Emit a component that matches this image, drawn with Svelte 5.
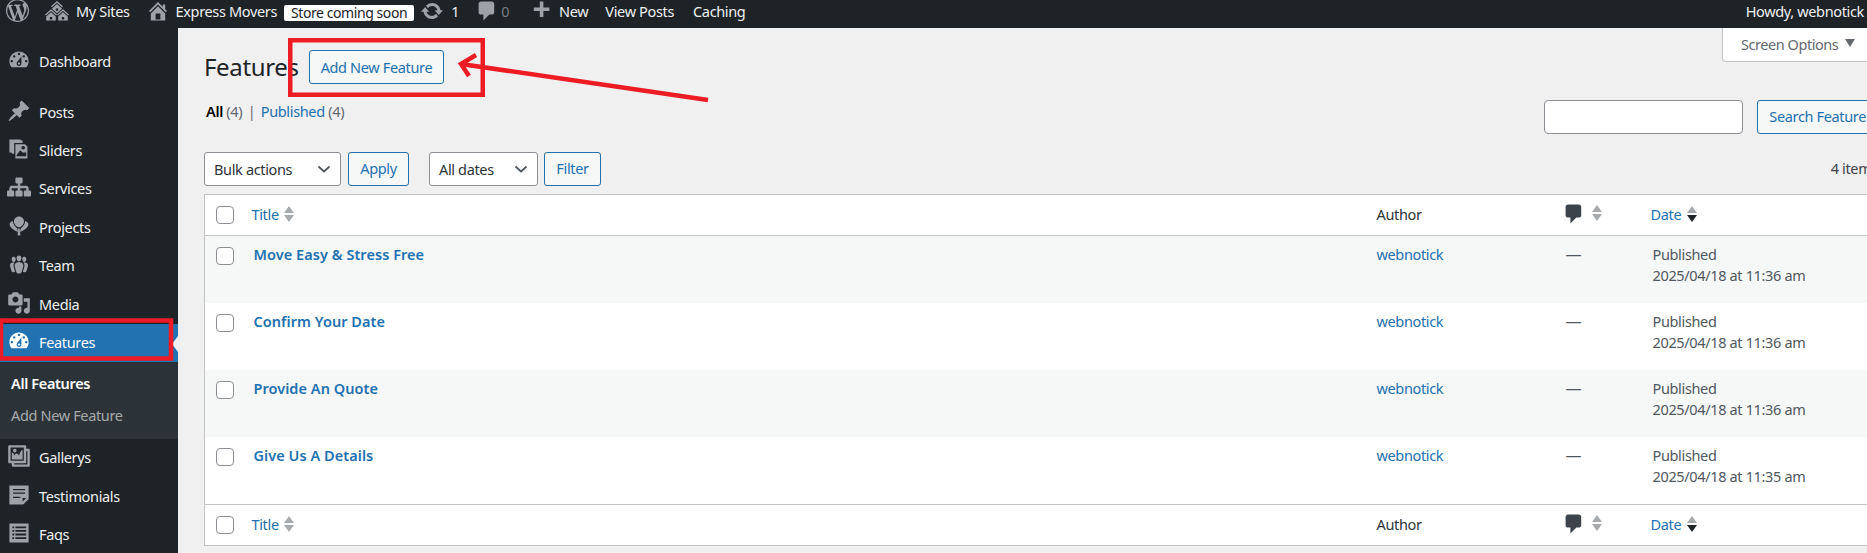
<script>
  const icons = {
    wp: 'M20 10c0-5.51-4.49-10-10-10C4.48 0 0 4.49 0 10c0 5.52 4.48 10 10 10 5.51 0 10-4.48 10-10zM7.78 15.37L4.37 6.22c.55-.02 1.17-.08 1.17-.08.5-.06.44-1.13-.06-1.11 0 0-1.45.11-2.37.11-.18 0-.37 0-.58-.01C4.12 2.69 6.87 1.11 10 1.11c2.33 0 4.45.87 6.05 2.34-.68-.11-1.65.39-1.65 1.58 0 .74.45 1.36.9 2.1.35.61.55 1.36.55 2.46 0 1.49-1.4 5-1.4 5l-3.03-8.37c.54-.02.82-.17.82-.17.5-.05.44-1.25-.06-1.22 0 0-1.44.12-2.38.12-.87 0-2.33-.12-2.33-.12-.5-.03-.56 1.2-.06 1.22l.92.08 1.26 3.41zM17.41 10c.24-.64.74-1.87.43-4.25.7 1.29 1.05 2.71 1.05 4.25 0 3.29-1.73 6.24-4.4 7.78.97-2.59 1.94-5.2 2.92-7.78zM6.1 18.09C3.12 16.65 1.11 13.53 1.11 10c0-1.3.23-2.48.72-3.59C3.25 10.3 4.67 14.2 6.1 18.09zm4.03-6.63l2.58 6.98c-.86.29-1.76.45-2.71.45-.79 0-1.57-.11-2.29-.33.81-2.38 1.62-4.74 2.42-7.1z',
    sites: 'M14.27 6.87L10 3.14 5.73 6.87 5 6.14l5-4.38 5 4.38zM14 8.42l-4.05 3.43L6 8.38v-.74l4-3.5 4 3.5v.78zM11 9.7V8H9v1.7h2zm-1.73 4.03L5 10 .73 13.73 0 13l5-4.38L10 13zm10 0L15 10l-4.27 3.73L10 13l5-4.38L20 13zM5 11l4 3.5V18H1v-3.5zm10 0l4 3.5V18h-8v-3.5zM6 17v-2H4v2h2zm10 0v-2h-2v2h2z',
    home: 'M16 8.5l1.53 1.53-1.06 1.06L10 4.62l-6.47 6.47-1.06-1.06L10 2.5l4 4v-2h2v4zm-6-2.46l6 5.99V18H4v-5.97zM12 17v-5H8v5h4z',
    update: 'M10.2 3.28c3.53 0 6.43 2.61 6.92 6h2.08l-3.5 4-3.5-4h2.32c-.45-1.97-2.21-3.45-4.32-3.45-1.45 0-2.73.71-3.54 1.78L4.95 5.66C6.23 4.2 8.11 3.28 10.2 3.28zm-.4 13.44c-3.52 0-6.43-2.61-6.92-6H.8l3.5-4c1.17 1.33 2.33 2.67 3.5 4H5.48c.45 1.97 2.21 3.45 4.32 3.45 1.45 0 2.73-.71 3.54-1.78l1.71 1.95c-1.28 1.46-3.15 2.38-5.25 2.38z',
    comment: 'M5 2h9c1.1 0 2 .9 2 2v7c0 1.1-.9 2-2 2h-2l-5 5v-5H5c-1.1 0-2-.9-2-2V4c0-1.1.9-2 2-2z',
    plus: 'M17 7v3h-5v5H9v-5H4V7h5V2h3v5h5z',
    dashboard: 'M3.76 16h12.48c1.1-1.37 1.76-3.11 1.76-5 0-4.42-3.58-8-8-8s-8 3.58-8 8c0 1.89.66 3.63 1.76 5zM10 4c.55 0 1 .45 1 1s-.45 1-1 1-1-.45-1-1 .45-1 1-1zM6 6c.55 0 1 .45 1 1s-.45 1-1 1-1-.45-1-1 .45-1 1-1zm8 0c.55 0 1 .45 1 1s-.45 1-1 1-1-.45-1-1 .45-1 1-1zm-5.37 5.55L12 7v6c0 1.1-.9 2-2 2s-2-.9-2-2c0-.57.24-1.08.63-1.45zM4 10c.55 0 1 .45 1 1s-.45 1-1 1-1-.45-1-1 .45-1 1-1zm12 0c.55 0 1 .45 1 1s-.45 1-1 1-1-.45-1-1 .45-1 1-1zm-5 3c0-.55-.45-1-1-1s-1 .45-1 1 .45 1 1 1 1-.45 1-1z',
    pin: 'M10.44 3.02l1.82-1.82 6.36 6.35-1.83 1.82c-1.05-.68-2.48-.57-3.41.36l-.75.75c-.92.93-1.04 2.35-.35 3.41l-1.83 1.82-2.41-2.41-2.8 2.79c-.42.42-3.38 2.71-3.8 2.29s1.86-3.39 2.28-3.81l2.79-2.79L4.1 9.36l1.83-1.82c1.05.69 2.48.57 3.4-.36l.75-.75c.93-.92 1.05-2.35.36-3.41z',
    sliders: 'M2 2h9l1 1h1v2H6v9H4v-1H2zM7 6h8l2 2v10H7zm6.5 1.5a1.5 1.5 0 1 0 0 3 1.5 1.5 0 0 0 0-3zM8 15l3-4 2 2 3 0v3H8z',
    network: 'M18 13h1c.55 0 1 .45 1 1.01v2.98c0 .56-.45 1.01-1 1.01h-4c-.55 0-1-.45-1-1.01v-2.98c0-.56.45-1.01 1-1.01h1v-2h-5v2h1c.55 0 1 .45 1 1.01v2.98c0 .56-.45 1.01-1 1.01H8c-.55 0-1-.45-1-1.01v-2.98c0-.56.45-1.01 1-1.01h1v-2H4v2h1c.55 0 1 .45 1 1.01v2.98C6 17.55 5.55 18 5 18H1c-.55 0-1-.45-1-1.01v-2.98C0 13.45.45 13 1 13h1v-2c0-1.1.9-2 2-2h5V7H8c-.55 0-1-.45-1-1.01V3.01C7 2.45 7.45 2 8 2h4c.55 0 1 .45 1 1.01v2.98C13 6.55 12.55 7 12 7h-1v2h5c1.1 0 2 .9 2 2v2z',
    projects: 'M10 2c2.6 0 4.2 2 4.2 4.2S12 10.6 10.4 11h-.8C8 10.6 5.8 8.4 5.8 6.2S7.4 2 10 2zM4.8 5.8c.2 2.4 2 4.8 3.8 6.2l.6 3C7.4 14.4 2.2 11.8 2.2 8.6c0-1.4 1.2-2.6 2.6-2.8zM15.2 5.8c1.4.2 2.6 1.4 2.6 2.8 0 3.2-5.2 5.8-7 6.4l.6-3c1.8-1.4 3.6-3.8 3.8-6.2zM9.4 12h1.2l.6 6H8.8z',
    team: 'M8.03 4.46c-.29 1.28.55 3.46 1.97 3.46 1.41 0 2.25-2.18 1.96-3.46-.22-.98-1.08-1.63-1.96-1.63-.89 0-1.74.65-1.97 1.63zm-4.13.9c-.25 1.08.47 2.93 1.67 2.93s1.92-1.85 1.67-2.93c-.19-.83-.92-1.39-1.67-1.39s-1.48.56-1.67 1.39zm8.86 0c-.25 1.08.47 2.93 1.66 2.93 1.2 0 1.92-1.85 1.67-2.93-.19-.83-.92-1.39-1.67-1.39-.74 0-1.47.56-1.66 1.39zm-.59 11.43l1.25-4.3C14.2 10 12.71 8.47 10 8.47c-2.72 0-4.21 1.53-3.44 4.02l1.26 4.3C8.05 17.51 9 18 10 18c.98 0 1.94-.49 2.17-1.21zm-6.1-7.63c-.49.67-.96 1.83-.42 3.59l1.12 3.79c-.34.2-.77.31-1.2.31-.85 0-1.65-.41-1.85-1.03l-1.07-3.65c-.65-2.11.61-3.4 2.92-3.4.27 0 .54.02.79.06-.1.1-.2.22-.29.33zm8.35-.39c2.31 0 3.58 1.29 2.92 3.4l-1.07 3.65c-.2.62-1 1.03-1.85 1.03-.43 0-.86-.11-1.2-.31l1.11-3.77c.55-1.78.08-2.94-.42-3.61-.08-.11-.18-.23-.28-.33.25-.04.51-.06.79-.06z',
    media: 'M13 11V4c0-.55-.45-1-1-1h-1.67L9 1H5L3.67 3H2c-.55 0-1 .45-1 1v7c0 .55.45 1 1 1h10c.55 0 1-.45 1-1zM7 4.5c1.38 0 2.5 1.12 2.5 2.5S8.38 9.5 7 9.5 4.5 8.38 4.5 7 5.62 4.5 7 4.5zM14 6h5v10.5c0 1.38-1.12 2.5-2.5 2.5S14 17.88 14 16.5s1.12-2.5 2.5-2.5c.17 0 .34.02.5.05V9h-3V6zm-4 8.05V13h2v3.5c0 1.38-1.12 2.5-2.5 2.5S7 17.88 7 16.5 8.12 14 9.5 14c.17 0 .34.02.5.05z',
    gallery: 'M16 4h1.96c.57 0 1.04.47 1.04 1.04v12.92c0 .57-.47 1.04-1.04 1.04H5.04C4.47 19 4 18.53 4 17.96V16H2.04C1.47 16 1 15.53 1 14.96V2.04C1 1.47 1.47 1 2.04 1h12.92c.57 0 1.04.47 1.04 1.04V4zM3 14h11V3H3v11zm5-8.5C8 4.67 7.33 4 6.5 4S5 4.67 5 5.5 5.67 7 6.5 7 8 6.33 8 5.5zm2 4.5s1-5 3-5v8H4V7c2 0 2 3 2 3s.33-2 2-2 2 2 2 2zm7 7V6h-1v8.96c0 .57-.47 1.04-1.04 1.04H6v1h11z',
    testimonial: 'M2 2h16v11.5L13.5 18H2zM5 5v1h10V5zM5 8v1h10V8zM5 11.5v1h6v-1zM13 12.5v3l3-3z',
    faqs: 'M2 2h16v16H2zM4.5 4.5V6H6V4.5zM7 4.5V6h9V4.5zM4.5 7.5V9H6V7.5zM7 7.5V9h9V7.5zM4.5 10.5V12H6v-1.5zM7 10.5V12h9v-1.5zM4.5 13.5V15H6v-1.5zM7 13.5V15h9v-1.5z'
  };

  const menuTop = [
    { label: 'Posts', icon: 'pin' },
    { label: 'Sliders', icon: 'sliders' },
    { label: 'Services', icon: 'network' },
    { label: 'Projects', icon: 'projects' },
    { label: 'Team', icon: 'team' },
    { label: 'Media', icon: 'media' }
  ];
  const menuBottom = [
    { label: 'Gallerys', icon: 'gallery' },
    { label: 'Testimonials', icon: 'testimonial' },
    { label: 'Faqs', icon: 'faqs' }
  ];

  const rows = [
    { title: 'Move Easy & Stress Free', date: '2025/04/18 at 11:36 am' },
    { title: 'Confirm Your Date', date: '2025/04/18 at 11:36 am' },
    { title: 'Provide An Quote', date: '2025/04/18 at 11:36 am' },
    { title: 'Give Us A Details', date: '2025/04/18 at 11:35 am' }
  ];
</script>

{#snippet icon(name, cls)}
  <svg class={cls} viewBox="0 0 20 20" fill-rule="evenodd" aria-hidden="true"><path d={icons[name]} /></svg>
{/snippet}

{#snippet sorter(active)}
  <svg class="sort" viewBox="0 0 10 18" aria-hidden="true">
    <path d="M5 1l5 7H0z" fill="#a7aaad" />
    <path d="M0 10h10l-5 7z" fill={active ? '#1d2327' : '#a7aaad'} />
  </svg>
{/snippet}

{#snippet headRow()}
  <tr class="head">
    <td class="cb"><span class="check"></span></td>
    <td class="title-col"><a href="#t" class="title-link">Title</a>{@render sorter(false)}</td>
    <td class="author-col">Author</td>
    <td class="comment-col">{@render icon('comment', 'bubble')}{@render sorter(false)}</td>
    <td class="date-col"><a href="#d" class="date-link">Date</a>{@render sorter(true)}</td>
  </tr>
{/snippet}

<div class="page">
  <header class="adminbar">
    {@render icon('wp', 'ab-wp')}
    <span class="ab-item sites">{@render icon('sites', 'ab-icon')}My Sites</span>
    <span class="ab-item home">{@render icon('home', 'ab-icon home-icon')}Express Movers</span>
    <span class="pill">Store coming soon</span>
    <span class="ab-item upd">{@render icon('update', 'ab-icon')}1</span>
    <span class="ab-item cmt">{@render icon('comment', 'ab-icon cmt-icon')}<span class="zero">0</span></span>
    <span class="ab-item new">{@render icon('plus', 'ab-icon plus-icon')}New</span>
    <span class="ab-item">View Posts</span>
    <span class="ab-item">Caching</span>
    <span class="howdy">Howdy, webnotick</span>
  </header>

  <div class="body">
    <nav class="side">
      <a href="#m" class="menu dash">{@render icon('dashboard', 'm-icon')}<span>Dashboard</span></a>
      {#each menuTop as m}
        <a href="#m" class="menu">{@render icon(m.icon, 'm-icon')}<span>{m.label}</span></a>
      {/each}
      <a href="#m" class="menu current">{@render icon('dashboard', 'm-icon')}<span>Features</span></a>
      <div class="submenu">
        <a href="#s" class="strong">All Features</a>
        <a href="#s">Add New Feature</a>
      </div>
      {#each menuBottom as m}
        <a href="#m" class="menu">{@render icon(m.icon, 'm-icon')}<span>{m.label}</span></a>
      {/each}
    </nav>

    <main class="content">
      <div class="top">
        <div class="heading">
          <h1>Features</h1>
          <a href="#n" class="btn add">Add New Feature</a>
        </div>
        <div class="screen-tab">Screen Options<span class="tri"></span></div>
      </div>

      <div class="filter-row">
        <div class="subsub"><b>All</b> <i>(4)</i> <span class="sep">|</span> <a href="#p">Published</a> <i>(4)</i></div>
        <div class="search">
          <span class="input"></span>
          <span class="btn raised">Search Feature</span>
        </div>
      </div>

      <div class="tablenav">
        <span class="select bulk">Bulk actions<svg viewBox="0 0 14 8"><path d="M1.5 1.5L7 6.5l5.5-5" /></svg></span>
        <span class="btn small raised">Apply</span>
        <span class="select dates">All dates<svg viewBox="0 0 14 8"><path d="M1.5 1.5L7 6.5l5.5-5" /></svg></span>
        <span class="btn small filter raised">Filter</span>
        <span class="count">4 items</span>
      </div>

      <table>
        <thead>{@render headRow()}</thead>
        <tbody>
          {#each rows as r, i}
            <tr class:alt={i % 2 === 0}>
              <td class="cb"><span class="check"></span></td>
              <td class="title-col"><a href="#r" class="row-title">{r.title}</a></td>
              <td class="author-col"><a href="#a">webnotick</a></td>
              <td class="comment-col"><span class="dash-cell">—</span></td>
              <td class="date-col published">Published<br />{r.date}</td>
            </tr>
          {/each}
        </tbody>
        <tfoot>{@render headRow()}</tfoot>
      </table>
    </main>
  </div>

  <!-- red annotations drawn on top of the screenshot -->
  <svg class="marks" viewBox="0 0 1867 553" aria-hidden="true">
    <rect x="290.25" y="40.25" width="192.5" height="54.5" />
    <rect x="1" y="320.5" width="170" height="38" />
    <path d="M708 100L461 64M476 55L461 64L469 76" />
  </svg>
</div>

<style>
  :global(body) {
    margin: 0;
    overflow: hidden;
    background: #f0f0f1;
  }

  .page {
    position: relative;
    width: 1867px;
    height: 553px;
    overflow: hidden;
    font-family: "Noto Sans", "Open Sans", sans-serif;
    font-size: 14.5px;
    letter-spacing: -0.35px;
    color: #3c434a;
  }

  a {
    color: #2271b1;
    text-decoration: none;
  }

  svg {
    fill: currentColor;
    flex: none;
  }

  .adminbar {
    display: flex;
    align-items: flex-start;
    height: 28px;
    background: #1d2327;
    color: #f0f0f1;
    line-height: 22px;
    white-space: nowrap;
    overflow: hidden;
  }

  .ab-wp {
    width: 23px;
    height: 23px;
    margin: -1px 0 0 6px;
    color: #9ca2a7;
  }

  .ab-item {
    display: flex;
    align-items: center;
    height: 22px;
    margin-right: 19px;
  }

  .ab-icon {
    width: 24px;
    height: 24px;
    margin-right: 7px;
    color: #9ca2a7;
  }

  .sites {
    margin-left: 16px;
  }

  .home-icon {
    margin-left: -3px;
    margin-right: 6px;
  }

  .home {
    margin-right: 7px;
  }

  .pill {
    background: #fff;
    color: #1d2327;
    height: 16px;
    line-height: 15px;
    margin: 5px 6px 0 0;
    padding: 0 7px;
    border-radius: 2px;
    font-size: 14px;
    letter-spacing: -0.42px;
  }

  .upd {
    margin-right: 16px;
  }

  .cmt-icon {
    margin-right: 2px;
  }

  .cmt {
    margin-right: 20px;
  }

  .plus-icon {
    margin-right: 6px;
  }

  .zero {
    color: #787c82;
  }

  .new {
    margin-right: 17px;
  }

  .howdy {
    margin-left: auto;
    margin-right: 3px;
  }

  .body {
    display: flex;
    height: 525px;
  }

  .side {
    width: 178px;
    flex: none;
    background: #1d2327;
    padding-top: 15px;
    box-sizing: border-box;
    color: #f0f0f1;
  }

  .menu {
    display: flex;
    align-items: center;
    height: 38.4px;
    color: #f0f0f1;
    position: relative;
  }

  .menu span {
    margin-left: 8px;
    position: relative;
    top: -1px;
  }

  .dash {
    margin-bottom: 12px;
  }

  .m-icon {
    width: 24px;
    height: 24px;
    margin-left: 7px;
    color: #9ca2a7;
    position: relative;
    top: -2px;
  }

  .current {
    background: #2271b1;
    color: #fff;
  }

  .current .m-icon {
    color: #fff;
  }

  .current::after {
    content: "";
    position: absolute;
    right: 0;
    top: 12px;
    border: 8px solid transparent;
    border-right-color: #f0f0f1;
    border-left-width: 0;
    border-right-width: 6px;
  }

  .submenu {
    background: #2c3338;
    height: 77px;
    padding: 5px 0 0 11px;
    box-sizing: border-box;
    display: flex;
    flex-direction: column;
  }

  .submenu a {
    height: 32px;
    line-height: 32px;
    color: #a7aaad;
  }

  .submenu .strong {
    color: #fff;
    font-weight: 600;
  }

  .content {
    width: 1700px;
    flex: none;
    padding-left: 26px;
    box-sizing: border-box;
  }

  .top {
    display: flex;
    justify-content: space-between;
    align-items: flex-start;
    height: 72px;
  }

  .heading {
    display: flex;
    align-items: center;
    gap: 10px;
    padding-top: 22px;
  }

  h1 {
    margin: 0;
    font-size: 24px;
    font-weight: 400;
    color: #1d2327;
    line-height: 34px;
  }

  .btn {
    display: inline-flex;
    align-items: center;
    height: 34px;
    padding: 0 11px;
    border: 1px solid #2271b1;
    border-radius: 3px;
    background: #f6f7f7;
    color: #2271b1;
    box-sizing: border-box;
    white-space: nowrap;
  }

  .btn.raised {
    padding-bottom: 3px;
  }

  .screen-tab {
    display: flex;
    align-items: center;
    box-sizing: border-box;
    height: 34px;
    width: 156px;
    padding: 0 0 2px 18px;
    background: #fff;
    border: 1px solid #c3c4c7;
    border-top: 0;
    border-radius: 0 0 4px 4px;
    color: #646970;
    white-space: nowrap;
    letter-spacing: -0.45px;
  }

  .tri {
    margin-left: 7px;
    border: 5.5px solid transparent;
    border-top: 8px solid #646970;
    border-bottom: 0;
    position: relative;
    top: -1px;
  }

  .filter-row {
    display: flex;
    justify-content: space-between;
    align-items: flex-start;
    height: 52px;
  }

  .subsub {
    color: #50575e;
    padding: 1px 0 0 2px;
    line-height: 20px;
  }

  .subsub b {
    color: #000;
    font-weight: 600;
  }

  .subsub i {
    font-style: normal;
    color: #646970;
  }

  .sep {
    color: #646970;
    margin: 0 2px;
  }

  .search {
    display: flex;
    gap: 14px;
  }

  .input {
    width: 199px;
    height: 34px;
    box-sizing: border-box;
    background: #fff;
    border: 1px solid #8c8f94;
    border-radius: 4px;
  }

  .tablenav {
    display: flex;
    align-items: center;
    height: 34px;
    margin-bottom: 8px;
  }

  .select {
    display: flex;
    align-items: center;
    justify-content: space-between;
    box-sizing: border-box;
    height: 34px;
    padding: 0 9px;
    background: #fff;
    border: 1px solid #8c8f94;
    border-radius: 3px;
    color: #2c3338;
  }

  .select svg {
    width: 14px;
    height: 8px;
    fill: none;
    stroke: #50575e;
    stroke-width: 1.8;
  }

  .bulk {
    width: 137px;
    margin-right: 7px;
  }

  .dates {
    width: 109px;
    margin: 0 6px 0 20px;
  }

  .small {
    justify-content: center;
  }

  .btn.small {
    width: 61px;
    padding-left: 0;
    padding-right: 0;
  }

  .btn.filter {
    width: 57px;
  }

  .count {
    margin-left: auto;
    margin-top: -2px;
    white-space: nowrap;
  }

  table {
    width: 1674px;
    border-collapse: collapse;
    table-layout: fixed;
    background: #fff;
    border: 1px solid #c3c4c7;
  }

  td {
    padding: 0;
    vertical-align: top;
  }

  .head td {
    height: 38px;
    padding-bottom: 2px;
    vertical-align: middle;
    color: #2c3338;
  }

  .head .check {
    margin-top: 2px;
  }

  thead .head {
    border-bottom: 1px solid #c3c4c7;
  }

  tfoot .head {
    border-top: 1px solid #c3c4c7;
  }

  tbody tr {
    height: 67.3px;
  }

  tbody td {
    padding-top: 8px;
    line-height: 21px;
  }

  tr.alt {
    background: #f6f7f7;
  }

  .cb {
    width: 47px;
    box-sizing: border-box;
    padding-left: 11px;
  }

  tbody .cb {
    padding-top: 11px;
  }

  .check {
    display: block;
    width: 18px;
    height: 18px;
    box-sizing: border-box;
    background: #fff;
    border: 1px solid #8c8f94;
    border-radius: 4px;
  }

  .title-col {
    width: 1125px;
  }

  .title-link {
    margin-right: 5px;
  }

  .row-title {
    font-weight: 600;
    margin-left: 2px;
    letter-spacing: 0.05px;
  }

  .author-col {
    width: 189px;
  }

  .comment-col {
    width: 85px;
  }

  .dash-cell {
    font-size: 16px;
    color: #50575e;
  }

  .date-link {
    margin-right: 6px;
  }

  .published {
    padding-left: 2px;
    color: #50575e;
  }

  .sort {
    width: 10px;
    height: 18px;
    vertical-align: -3px;
  }

  .bubble {
    width: 24px;
    height: 24px;
    color: #3c434a;
    margin: 0 6px 0 -4px;
    vertical-align: -7px;
  }

  .marks {
    position: absolute;
    inset: 0;
    width: 1867px;
    height: 553px;
    pointer-events: none;
    fill: none;
    stroke: #ed1c24;
    stroke-width: 4.5;
  }
</style>
